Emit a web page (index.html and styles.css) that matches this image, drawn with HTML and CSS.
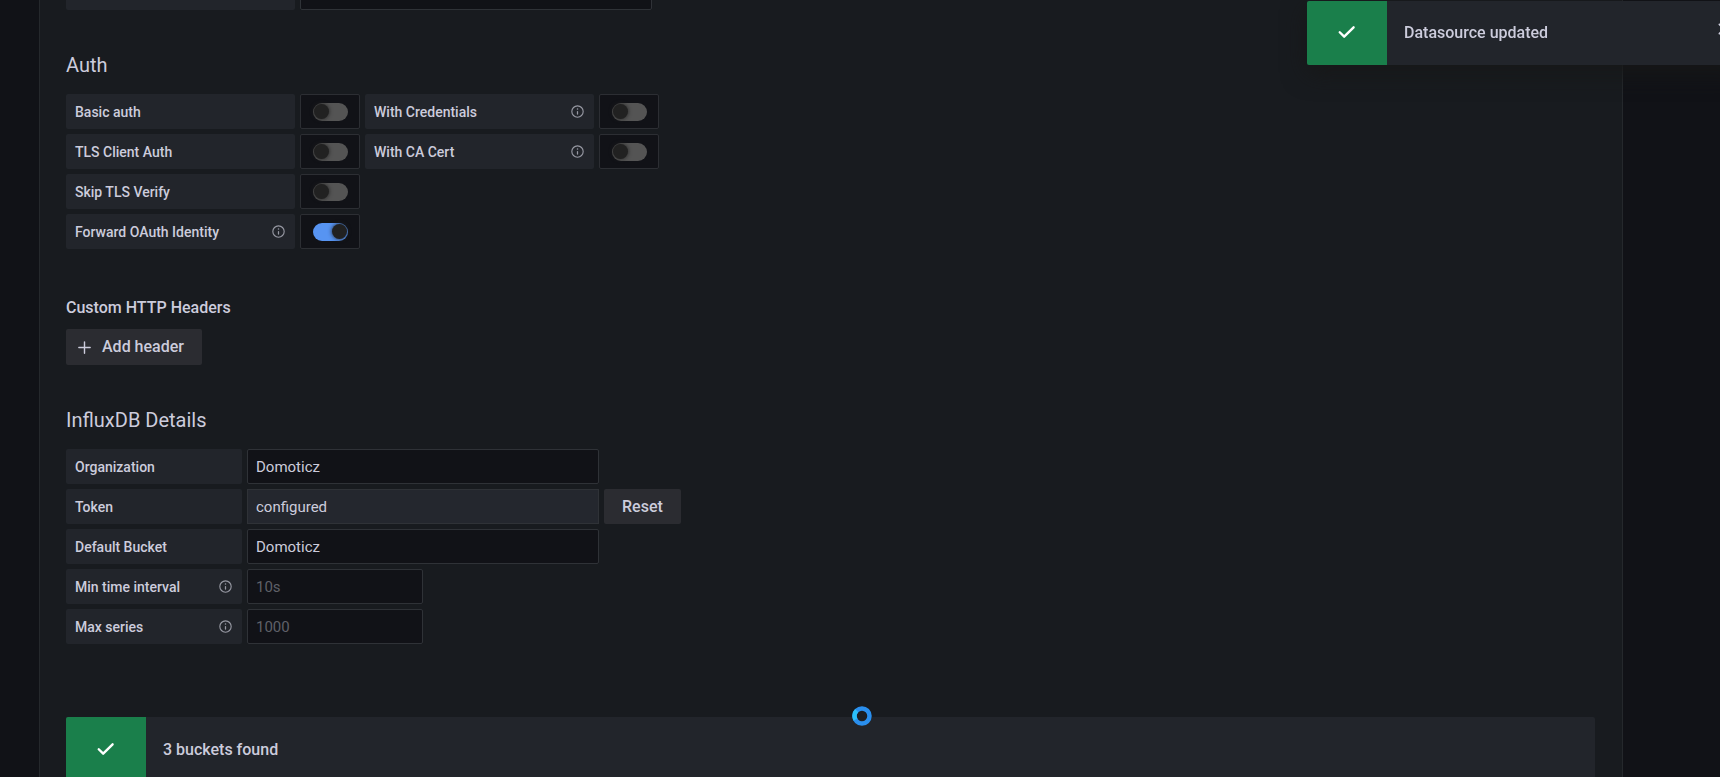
FILE: index.html
```html
<!DOCTYPE html>
<html lang="en">
<head>
<meta charset="utf-8">
<title>InfluxDB data source settings</title>
<link rel="stylesheet" href="styles.css">
</head>
<body>
<svg class="sprite" aria-hidden="true">
  <symbol id="info" viewBox="0 0 24 24"><path fill="currentColor" d="M12 2a10 10 0 1 0 10 10A10 10 0 0 0 12 2zm0 18.200a8.200 8.200 0 1 1 8.200-8.200 8.200 8.200 0 0 1-8.200 8.200zM12 11a1 1 0 0 0-1 1v4a1 1 0 0 0 2 0v-4a1 1 0 0 0-1-1zm0-4.200a1.250 1.250 0 1 0 1.250 1.250A1.250 1.250 0 0 0 12 6.800z"/></symbol>
  <symbol id="check" viewBox="0 0 24 24"><path fill="none" stroke="currentColor" stroke-width="2.200" stroke-linecap="round" stroke-linejoin="round" d="M5.300 11.300l4.100 4.100 8.700-8.600"/></symbol>
  <symbol id="times" viewBox="0 0 24 24"><path fill="none" stroke="currentColor" stroke-width="2" stroke-linecap="round" d="M7 7l10 10m0-10l-10 10"/></symbol>
  <symbol id="plus" viewBox="0 0 24 24"><path fill="none" stroke="currentColor" stroke-width="2" stroke-linecap="round" d="M12 4v16M4 12h16"/></symbol>
</svg>

<main class="page">
  <form class="panel">
    <div class="row row-scrolled">
      <label class="label label-wide" for="timeout"></label>
      <input class="input" id="timeout" type="text">
    </div>

    <section class="auth">
      <h3 class="heading">Auth</h3>
      <div class="rows">
        <div class="row">
          <label class="label label-wide" for="basic">Basic auth</label>
          <span class="switch-box"><input class="switch" id="basic" type="checkbox"></span>
          <label class="label label-wide" for="cred">With Credentials <svg class="info"><use href="#info"/></svg></label>
          <span class="switch-box"><input class="switch" id="cred" type="checkbox"></span>
        </div>
        <div class="row">
          <label class="label label-wide" for="tls">TLS Client Auth</label>
          <span class="switch-box"><input class="switch" id="tls" type="checkbox"></span>
          <label class="label label-wide" for="ca">With CA Cert <svg class="info"><use href="#info"/></svg></label>
          <span class="switch-box"><input class="switch" id="ca" type="checkbox"></span>
        </div>
        <div class="row">
          <label class="label label-wide" for="skip">Skip TLS Verify</label>
          <span class="switch-box"><input class="switch" id="skip" type="checkbox"></span>
        </div>
        <div class="row">
          <label class="label label-wide" for="oauth">Forward OAuth Identity <svg class="info"><use href="#info"/></svg></label>
          <span class="switch-box"><input class="switch" id="oauth" type="checkbox" checked></span>
        </div>
      </div>
    </section>

    <section class="headers">
      <h6 class="subheading">Custom HTTP Headers</h6>
      <button class="button button-add" type="button"><svg class="plus"><use href="#plus"/></svg>Add header</button>
    </section>

    <section class="details">
      <h3 class="heading">InfluxDB Details</h3>
      <div class="rows">
        <div class="row">
          <label class="label" for="org">Organization</label>
          <input class="input" id="org" type="text" value="Domoticz">
        </div>
        <div class="row">
          <label class="label" for="token">Token</label>
          <input class="input" id="token" type="text" value="configured" disabled>
          <button class="button" type="button">Reset</button>
        </div>
        <div class="row">
          <label class="label" for="bucket">Default Bucket</label>
          <input class="input" id="bucket" type="text" value="Domoticz">
        </div>
        <div class="row">
          <label class="label" for="interval">Min time interval <svg class="info"><use href="#info"/></svg></label>
          <input class="input input-short" id="interval" type="text" placeholder="10s">
        </div>
        <div class="row">
          <label class="label" for="series">Max series <svg class="info"><use href="#info"/></svg></label>
          <input class="input input-short" id="series" type="text" placeholder="1000">
        </div>
      </div>
    </section>

    <div class="alert" role="status">
      <span class="alert-icon"><svg class="check"><use href="#check"/></svg></span>
      <span class="alert-text">3 buckets found</span>
    </div>
  </form>
</main>

<div class="alert toast" role="status">
  <span class="alert-icon"><svg class="check"><use href="#check"/></svg></span>
  <span class="alert-text">Datasource updated</span>
  <button class="close" type="button" aria-label="Close"><svg class="times"><use href="#times"/></svg></button>
</div>
<svg class="pointer" viewBox="0 0 20 20" aria-hidden="true">
  <circle cx="10" cy="10" r="5" fill="#1d1f23"/>
  <circle cx="10" cy="10" r="7.500" fill="none" stroke="#2a8fee" stroke-width="4.500"/>
  <path d="M4.700 4.700A7.500 7.500 0 0 0 3.500 13.700" fill="none" stroke="#2bc0f8" stroke-width="4.500"/>
</svg>
</body>
</html>
```
FILE: styles.css
```css
* { box-sizing: border-box; }

body {
  margin: 0;
  background: #111217;
  color: #ccccdc;
  font: 400 15px/22px Roboto, "Liberation Sans", sans-serif;
}

.sprite { display: none; }
svg { flex: none; }

.page {
  height: 100vh;
  overflow: hidden;
  padding: 0 97px 0 39px;
}

.panel {
  min-height: 100%;
  padding: 0 27px 0 26px;
  background: #181b1f;
  border: solid #25282c;
  border-width: 0 1px;
}

.rows { display: grid; gap: 5px; }
.row { display: flex; gap: 5px; }

.row-scrolled {
  height: 10px;
  overflow: hidden;
  align-items: flex-end;
}

.auth { padding-top: 42px; }
.headers { padding-top: 48px; }
.details { padding-top: 42px; }

.heading {
  margin: 0 0 16px;
  font-size: 20px;
  line-height: 26px;
  font-weight: 400;
}

.subheading {
  margin: 0 0 10px;
  font-size: 16px;
  line-height: 22px;
  font-weight: 500;
}

.label {
  display: flex;
  align-items: center;
  justify-content: space-between;
  width: 176px;
  height: 35px;
  padding: 0 9px;
  background: #22252b;
  border-radius: 2px;
  font-size: 14px;
  font-weight: 500;
}

.label-wide { width: 229px; }

.info {
  width: 15px;
  height: 15px;
  color: #9799a3;
}

.switch-box {
  display: grid;
  place-items: center;
  width: 60px;
  height: 35px;
  background: #111217;
  border: 1px solid #2c2e33;
  border-radius: 2px;
}

.switch {
  appearance: none;
  display: flex;
  align-items: center;
  width: 35px;
  height: 18px;
  margin: 0;
  padding: 0 1px;
  border-radius: 9px;
  background: #545454;
}

.switch::before {
  content: "";
  width: 15px;
  height: 15px;
  border-radius: 50%;
  background: #212121;
  box-shadow: 0 0 4px #202020;
}

.switch:checked {
  justify-content: flex-end;
  background: #5794f2;
}

.input {
  width: 352px;
  height: 35px;
  padding: 0 8px;
  background: #111217;
  border: 1px solid #2f3237;
  border-radius: 2px;
  color: inherit;
  font: inherit;
}

.input:disabled { background: #24272e; border-radius: 0; }
.input::placeholder { color: #5f6068; opacity: 1; }
.input-short { width: 176px; }

.button {
  display: inline-flex;
  align-items: center;
  justify-content: center;
  gap: 9px;
  height: 35px;
  padding: 0 18px;
  border: 0;
  border-radius: 2px;
  background: #2b2c31;
  color: inherit;
  font: inherit;
  font-size: 16px;
  font-weight: 500;
}

.button-add { height: 36px; padding: 0 18px 0 10px; }
.plus { width: 17px; height: 17px; }

.alert {
  display: flex;
  height: 65px;
  margin-top: 73px;
  background: #22252b;
  border-radius: 2px;
}

.alert-icon {
  display: grid;
  place-items: center;
  width: 80px;
  background: #1a7f4b;
  border-radius: 2px 0 0 2px;
  color: #fff;
}

.check { width: 26px; height: 26px; }

.alert-text {
  flex: 1;
  align-self: center;
  padding-left: 17px;
  font-size: 16px;
  font-weight: 500;
}

.toast {
  position: fixed;
  top: 1px;
  right: -23px;
  width: 436px;
  height: 64px;
  margin: 0;
  box-shadow: 0 8px 24px #171818;
}

.close {
  display: grid;
  place-items: center;
  width: 38px;
  padding: 0 0 9px;
  border: 0;
  background: none;
  color: inherit;
}

.times { width: 22px; height: 22px; }

.pointer {
  position: fixed;
  left: 852px;
  top: 706px;
  width: 20px;
  height: 20px;
}
```
